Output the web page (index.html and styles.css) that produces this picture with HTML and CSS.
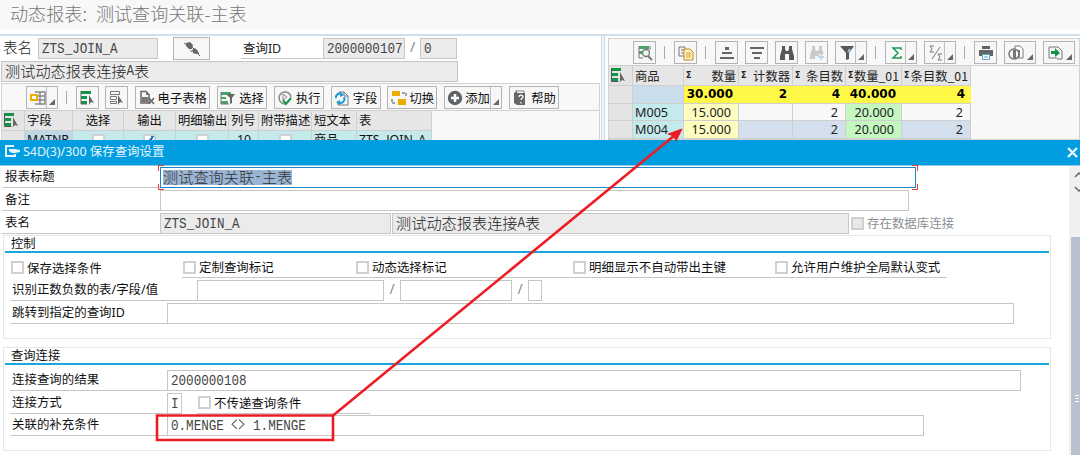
FILE: index.html
```
<!DOCTYPE html>
<html lang="zh-CN">
<head>
	<meta charset="UTF-8">
	<title>动态报表</title>
	<link rel="stylesheet" href="styles.css">
</head>
<body>
	<h1 class="titulo">动态报表: 测试查询关联-主表</h1>
	<div class="paneles">
		<section class="izquierda">
			<div class="filtros">
				<span class="nombre">表名</span>
				<span class="campo gris tabla-nombre"><i>ZTS_JOIN_A</i></span>
				<button class="btn enlace"><svg width="18" height="16" viewBox="0 0 18 16"><path d="M3 2l4-1 3 3-1 4-3 0-3-3zM9 9l3-2 3 3 1 3-3 0-3-1z" fill="#666"/><path d="M1 2l3 2M14 12l3 3M9 6l2 2M7 9l2 2" stroke="#666"/></svg></button>
				<span class="consulta">查询ID</span>
				<span class="campo gris numero"><i>2000000107</i></span>
				<span class="barra">/</span>
				<span class="campo gris cero"><i>0</i></span>
			</div>
			<div class="campo gris descripcion">测试动态报表连接<i class="letra">A</i>表</div>
			<div class="marco">
				<div class="herramientas">
					<button class="btn w32 partido"><svg width="17" height="16" viewBox="0 0 17 16"><path d="M5 2h10v12H5M10 2v12M6 6h9M6 10h9" stroke="#888" fill="none" stroke-width="1.5"/><path d="M1 5h6v5H1z" fill="#fff" stroke="#f0ab00" stroke-width="2"/></svg></button>
					<span class="sep"></span>
					<button class="btn w23"><svg width="15" height="16" viewBox="0 0 15 16"><path d="M1 1h10v3H1zM1 6h6v3H1zM1 11h6v3H1z" fill="#129447"/><path d="M9 5l5 8-3-1-2 3z" fill="#666"/><path d="M1 1v13h6" stroke="#666" fill="none"/></svg></button>
					<button class="btn w23"><svg width="15" height="16" viewBox="0 0 15 16"><path d="M1.500 1.500h9v3h-9zM1.500 6.500h6v3h-6zM1.500 11.500h6v2h-6z" fill="none" stroke="#777"/><path d="M9 5l5 8-3-1-2 3z" fill="#666"/></svg></button>
					<button class="btn w75"><svg width="16" height="16" viewBox="0 0 16 16"><path d="M2 1.500h5l3 3V13H2z" fill="none" stroke="#666" stroke-width="1.500"/><path d="M3 7h6v5H3zM7 1v4h4z" fill="#777"/><path d="M10 8l5 6M15 8l-5 6" stroke="#666" stroke-width="1.500"/></svg>电子表格</button>
					<button class="btn w50"><svg width="16" height="16" viewBox="0 0 16 16"><path d="M1 2h10v3H1zM1 7h5v2H1zM1 11h7v3H1z" fill="#45a56b"/><path d="M1 2v12h8" stroke="#777" fill="none"/><path d="M6 4h9l-3 4v5l-2 1V8z" fill="#666"/></svg>选择</button>
					<button class="btn w50"><svg width="16" height="16" viewBox="0 0 16 16"><path d="M14 7A6 6 0 1 0 8 14" fill="none" stroke="#888" stroke-width="1.500"/><path d="M6 4l4 3-4 3z" fill="none" stroke="#888"/><path d="M6 10l3 4 5-6" stroke="#129447" stroke-width="2" fill="none"/></svg>执行</button>
					<button class="btn w50"><svg width="16" height="16" viewBox="0 0 16 16"><path d="M5 2h5l4 4v9H4v-2M10 2v4h4" fill="none" stroke="#777"/><path d="M2 8a4 4 0 0 1 6-4M10 7a4 4 0 0 1-6 5" stroke="#1c9ad9" stroke-width="2" fill="none"/><path d="M6 2l4 3-4 2zM6 10l-4 2 4 3z" fill="#1c9ad9"/></svg>字段</button>
					<button class="btn w50"><svg width="16" height="16" viewBox="0 0 16 16"><path d="M1 1h8v5H1zM7 9h8v6H7z" fill="#f0ab00"/><path d="M11 3h4v4M1 9v4h4" stroke="#888" fill="none" stroke-width="1.500" stroke-dasharray="3 1"/></svg>切换</button>
					<button class="btn w58 partido"><svg width="16" height="16" viewBox="0 0 16 16"><circle cx="8" cy="8" r="7.200" fill="#606366"/><path d="M8 4v8M4 8h8" stroke="#fff" stroke-width="2.500"/></svg>添加</button>
					<button class="btn w50"><svg width="16" height="16" viewBox="0 0 16 16"><path d="M2 3l3-2v14l-3-2zM5 3h8v12H5z" fill="#666"/><path d="M3 1h9v2" stroke="#888" fill="none"/><path d="M7 7c0-3 4-2 4 0 0 1-2 1-2 3M9 12v1.500" stroke="#fff" fill="none" stroke-width="1.300"/></svg>帮助</button>
				</div>
				<div class="rejilla campos">
					<b class="sel"><svg width="17" height="16" viewBox="0 0 17 16"><path d="M2 1h9v3H2zM2 6h6v3H2zM2 11h6v3H2z" fill="#129447"/><path d="M10 5l5 9-3-1-2 2z" fill="#666"/><path d="M1.500 1v13.500h7" stroke="#555" fill="none"/></svg></b>
					<b>字段</b><b class="c">选择</b><b class="c">输出</b><b>明细输出</b><b>列号</b><b>附带描述</b><b>短文本</b><b>表</b>
					<span class="sel"></span><span class="activo">MATNR</span><span class="c"><u class="check"></u></span><span class="c"><u class="check marcado"></u></span><span class="c"><u class="check"></u></span><span class="d">10</span><span class="c"><u class="check"></u></span><span>商品</span><span>ZTS_JOIN_A</span>
				</div>
			</div>
		</section>
		<div class="divisor"></div>
		<section class="derecha">
			<div class="herramientas">
				<button class="btn w23"><svg width="16" height="16" viewBox="0 0 16 16"><path d="M2 1h10v3H2zM2 6h4v3H2z" fill="#45a56b"/><path d="M2 1v12h4M13 1v4" stroke="#777" fill="none"/><circle cx="9" cy="8" r="3.500" fill="#eef6f0" stroke="#777" stroke-width="1.400"/><path d="M11 11l4 4" stroke="#777" stroke-width="2"/></svg></button>
				<span class="sep"></span>
				<button class="btn w23"><svg width="16" height="16" viewBox="0 0 16 16"><path d="M1 2h6v9H1zM3 5h4M3 8h4" fill="none" stroke="#777"/><path d="M6 4h6l3 3v8H6z" fill="#fff3c4" stroke="#c38a20"/><path d="M8 8h5M8 10h5M8 12h5" stroke="#e09a20"/></svg></button>
				<span class="sep"></span>
				<button class="btn w23"><svg width="16" height="16" viewBox="0 0 16 16"><path d="M6 2h4v3H6zM3 7h10v2H3zM1 12h14v2H1z" fill="#666"/></svg></button>
				<button class="btn w23"><svg width="16" height="16" viewBox="0 0 16 16"><path d="M1 2h14v2H1zM3 7h10v2H3zM5 12h6v2H5z" fill="#666"/></svg></button>
				<button class="btn w23"><svg width="16" height="16" viewBox="0 0 16 16"><path d="M3 1h3v3l1 2h2l1-2V1h3v3l2 7v4h-5V9H6v6H1v-4l2-7z" fill="#55585b"/></svg></button>
				<button class="btn w23"><svg width="16" height="16" viewBox="0 0 16 16"><path d="M3 1h3v3l1 2h2l1-2V1h3v3l2 5h-5v2H6v3H1v-3l2-7z" fill="#c8cacb"/><path d="M12 9v6M9 12h6" stroke="#a6d9ef" stroke-width="1.500"/></svg></button>
				<button class="btn w32 partido"><svg width="17" height="16" viewBox="0 0 17 16"><path d="M1 1h14l-5 7v6l-3 1V8z" fill="#55585b"/><path d="M11 4l-2 3" stroke="#9fc3dc" stroke-width="2"/></svg></button>
				<span class="sep"></span>
				<button class="btn w32 partido"><svg width="16" height="16" viewBox="0 0 16 16"><path d="M12 5V3H4l5 5-5 5h8v-2" stroke="#1a9b56" stroke-width="1.500" fill="none"/></svg></button>
				<button class="btn w32 partido"><svg width="16" height="16" viewBox="0 0 16 16"><path d="M6 1H2l2 3-2 3h4M14 9h-4l2 3-2 3h4M12 2L4 14" stroke="#777" fill="none"/></svg></button>
				<span class="sep"></span>
				<button class="btn w23"><svg width="16" height="16" viewBox="0 0 16 16"><path d="M4 1h8v3H4zM1 5h14v6h-3V9H4v2H1z" fill="#606366"/><path d="M4.500 9.500h7v5h-7z" fill="#fff" stroke="#5da3c2"/><path d="M6 12h4" stroke="#5da3c2"/></svg></button>
				<button class="btn w32 flecha"><svg width="17" height="16" viewBox="0 0 17 16"><path d="M7 1h5l3 3v9H7z" fill="#fff" stroke="#777"/><circle cx="6" cy="9" r="5" fill="none" stroke="#777" stroke-width="1.500"/><path d="M5 5h3v8H5zM10 5h2v7h-2z" fill="#777"/></svg></button>
				<button class="btn w32 flecha"><svg width="17" height="16" viewBox="0 0 17 16"><path d="M9 2H2v11h8M9 2h2l4 4v8h-5" fill="none" stroke="#777"/><path d="M4 6h4V3l5 5-5 4V9H4z" fill="#129447"/></svg></button>
			</div>
			<div class="rejilla resultado">
				<b class="sel"><svg width="17" height="16" viewBox="0 0 17 16"><path d="M2 1h9v3H2zM2 6h6v3H2zM2 11h6v3H2z" fill="#129447"/><path d="M10 5l5 9-3-1-2 2z" fill="#666"/><path d="M1.500 1v13.500h7" stroke="#555" fill="none"/></svg></b>
				<b>商品</b><b><em>Σ</em>数量</b><b><em>Σ</em>计数器</b><b><em>Σ</em>条目数</b><b><em>Σ</em>数量_01</b><b><em>Σ</em>条目数_01</b>
				<span class="sel"></span><span class="vacio"></span><span class="total">30.000</span><span class="total">2</span><span class="total">4</span><span class="total">40.000</span><span class="total">4</span>
				<span class="sel"></span><span class="clave">M005</span><span class="amarillo">15.000</span><span></span><span>2</span><span class="verde">20.000</span><span>2</span>
				<span class="sel"></span><span class="clave">M004</span><span class="amarillo">15.000</span><span class="azul"></span><span class="azul">2</span><span class="verde">20.000</span><span class="azul">2</span>
			</div>
		</section>
	</div>

	<div class="dialogo">
		<div class="cabecera">
			<svg width="16" height="12" viewBox="0 0 16 12"><path d="M9 1H1v10h9V9" fill="none" stroke="#e8f4fb" stroke-width="2"/><path d="M4 4h6l5 1v2l-5 1H7L4 6z" fill="#e8f4fb"/></svg>
			<span>S4D(3)/300 保存查询设置</span>
			<svg class="cerrar" width="11" height="11" viewBox="0 0 11 11"><path d="M1 1l9 9M10 1l-9 9" stroke="#eaf6fc" stroke-width="2.400"/></svg>
		</div>
		<div class="cuerpo">
			<div class="formulario">
				<div class="linea"><label>报表标题</label><div class="campo foco"><mark>测试查询关联<i>-</i>主表</mark></div></div>
				<div class="linea"><label>备注</label><div class="campo nota"></div></div>
				<div class="linea"><label>表名</label><div class="campo gris t1"><i>ZTS_JOIN_A</i></div><div class="campo gris t2">测试动态报表连接<i class="letra">A</i>表</div><span class="opcion apagada"><u class="check"></u>存在数据库连接</span></div>
				<fieldset>
					<h2>控制</h2>
					<div class="opciones">
						<span class="opcion"><u class="check"></u>保存选择条件</span>
						<span class="opcion sub"><u class="check"></u>定制查询标记</span>
						<span class="opcion sub"><u class="check"></u>动态选择标记</span>
						<span class="opcion sub"><u class="check"></u>明细显示不自动带出主键</span>
						<span class="opcion sub"><u class="check"></u>允许用户维护全局默认变式</span>
					</div>
					<div class="linea"><label class="largo">识别正数负数的表/字段/值</label><div class="campo s1"></div><span class="barra">/</span><div class="campo s2"></div><span class="barra">/</span><div class="campo s3"></div></div>
					<div class="linea"><label>跳转到指定的查询ID</label><div class="campo salto"></div></div>
				</fieldset>
				<fieldset>
					<h2>查询连接</h2>
					<div class="linea"><label>连接查询的结果</label><div class="campo res"><i>2000000108</i></div></div>
					<div class="linea"><label>连接方式</label><div class="campo modo"><i>I</i></div><span class="opcion sub pasar"><u class="check"></u>不传递查询条件</span></div>
					<div class="linea"><label>关联的补充条件</label><div class="campo cond"><i>0.MENGE <svg width="14" height="9" viewBox="0 0 14 9"><path d="M6 .5l-5 4 5 4M8 .5l5 4-5 4" fill="none" stroke="#666"/></svg> 1.MENGE</i></div></div>
				</fieldset>
			</div>
			<div class="scroll">
				<svg width="11" height="24" viewBox="0 0 11 24"><path d="M6 7l4-4 4 4M6 17l4 4 4-4" fill="none" stroke="#666" stroke-width="1.500"/></svg>
				<div class="pulgar"><span></span></div>
			</div>
		</div>
	</div>

	<svg class="anotacion" width="1080" height="455" viewBox="0 0 1080 455">
		<path d="M157 415.500h176v24.500H157zM333 415.500L675 135" fill="none" stroke="#ed1c24" stroke-width="2.600"/>
		<path d="M682 129l-6 12-2-5-6-2z" fill="#ed1c24" stroke="#ed1c24"/>
	</svg>
</body>
</html>
```
FILE: styles.css
```
*{
	margin:0;
	padding:0;
	box-sizing: border-box;
}
body{
	width: 1080px;
	height: 455px;
	overflow: hidden;
	position: relative;
	background: #fff;
	color: #222;
	font-family: "Noto Sans", "Noto Sans CJK SC", sans-serif;
	font-size: 12.45px;
}
svg{
	flex: none;
}
.titulo{
	height: 29px;
	padding-left: 10px;
	background: #f8f8f8;
	color: #777;
	font-family: "Noto Sans CJK SC", sans-serif;
	font-size: 18.1px;
	font-weight: 300;
	line-height: 27px;
	word-spacing: 5px;
}
.paneles{
	display: flex;
	height: 106px;
	margin-top: 5px;
	border-top: 2px solid #d0dfec;
	overflow: hidden;
}
.izquierda{
	width: 601px;
	padding: 2px 0 0 1px;
}
.divisor{
	width: 4px;
	margin-right: 3px;
	border: 1px solid #cbdcec;
	border-width: 0 1px;
	background: #eef4fa;
}

/* campos */
.campo{
	height: 21px;
	padding-left: 3px;
	border: 1px solid #c6c6c6;
	background: #fff;
	font-family: "Noto Sans CJK SC", sans-serif;
	font-size: 15.2px;
	font-weight: 300;
	line-height: 17px;
	white-space: nowrap;
}
.campo i{
	font-family: "Liberation Mono", monospace;
	font-size: 12.6px;
	font-style: normal;
	font-weight: 400;
	color: #444;
	display: inline-block;
	line-height: 20px;
	vertical-align: top;
	white-space: pre;
	transform: scaleY(1.18);
}
.campo .letra{
	line-height: 21px;
	margin-bottom: -4px;
}
.gris{
	background: #ebebeb;
}
.barra{
	color: #888;
	text-align: center;
	font-size: 14px;
	line-height: 18px;
}
.filtros{
	display: flex;
	height: 23px;
}
.nombre{
	width: 37px;
	padding-left: 2px;
	font-size: 14.6px;
	font-weight: 300;
	line-height: 17px;
	font-family: "Noto Sans CJK SC", sans-serif;
}
.tabla-nombre{
	width: 120px;
}
.filtros .enlace{
	width: 37px;
	margin: -1px 31px 0 15px;
}
.consulta{
	width: 82px;
	height: 21px;
	padding-left: 2px;
	border-bottom: 1px solid #c6c6c6;
	line-height: 21px;
}
.numero{
	width: 82px;
}
.filtros .barra{
	width: 15px;
}
.cero{
	width: 37px;
}
.descripcion{
	width: 457px;
}
.marco{
	width: 599px;
	margin-top: 1px;
	border: 1px solid #d2d2d2;
	background: #f8f8f8;
}

/* barras de botones */
.herramientas{
	display: flex;
	gap: 7px;
	height: 27px;
	padding: 2px 0 0 24px;
	border-bottom: 1px solid #d0d0d0;
}
.izquierda .herramientas{
	gap: 6.800px;
}
.btn{
	display: flex;
	flex: none;
	align-items: center;
	justify-content: center;
	gap: 3px;
	height: 23px;
	position: relative;
	border: 1px solid #b4b4b4;
	background: #f7f7f7;
	color: #111;
	font: 12.3px "Noto Sans CJK SC", sans-serif;
	white-space: nowrap;
}
.w23{
	width: 23px;
}
.w32{
	width: 32px;
}
.w50{
	width: 50px;
}
.w58{
	width: 58px;
}
.w75{
	width: 75px;
}
.partido, .flecha{
	justify-content: flex-start;
	padding-left: 3px;
}
.w58.partido{
	padding-left: 2px;
	gap: 2px;
}
.partido::before{
	content: "";
	position: absolute;
	top: 0;
	right: 10px;
	height: 21px;
	border-left: 1px solid #c0c0c0;
}
.partido::after, .flecha::after{
	content: "";
	position: absolute;
	right: 2px;
	bottom: 3px;
	border: 3px solid #666;
	border-top-color: transparent;
	border-left-color: transparent;
}
.sep{
	width: 3px;
	height: 13px;
	margin-top: 5px;
	border-left: 1px solid #aaa;
	margin-left: 1px;
}

/* rejillas */
.rejilla{
	display: grid;
}
.rejilla b, .rejilla span{
	padding: 0 2px;
	border-right: 1px solid #cfcfcf;
	border-bottom: 1px solid #cfcfcf;
	font-weight: 400;
	white-space: nowrap;
	overflow: hidden;
}
.rejilla b{
	background: #e6e6e6;
}
.rejilla b.sel{
	padding: 1px;
}
.rejilla .c{
	text-align: center;
}
.campos{
	grid-template-columns: 23px 48px 51px 52px 53px 30px 53px 45px 75px;
	grid-template-rows: 20px 18px;
	line-height: 19px;
	font-size: 12.3px;
	color: #111;
}
.campos span{
	background: #c5eaec;
	line-height: 17px;
}
.campos .d{
	text-align: right;
	padding-right: 7px;
}
.rejilla .sel{
	background: #e4e4e4;
}
.campos .activo{
	background: #bed8e5;
}
.derecha{
	flex: 1;
	margin-top: 2px;
	border: 1px solid #d2d2d2;
	background: #f8f8f8;
}
.resultado{
	grid-template-columns: 24px 51px 55px 54px 53px 56px 69px;
	grid-template-rows: 20px 18px 17px 18px;
	line-height: 18px;
	font-size: 12.6px;
}
.resultado b{
	display: flex;
	justify-content: space-between;
	font-family: "Noto Sans CJK SC", sans-serif;
	font-size: 12.3px;
	line-height: 20px;
}
.resultado em{
	font: bold 8px/20px "DejaVu Sans", sans-serif;
}
.resultado span{
	text-align: right;
	padding-right: 7px;
	line-height: 17px;
}
.resultado .vacio{
	background: #c9deea;
}
.resultado .total{
	padding-right: 5px;
	background: #fff846;
	border-right-color: #fff846;
	font-family: "DejaVu Sans", sans-serif;
	font-size: 12px;
	font-weight: 700;
	line-height: 17px;
	color: #000;
}
.resultado .clave{
	background: #c5eaec;
	text-align: left;
}
.resultado .amarillo{
	background: #fffdc0;
}
.resultado .verde{
	background: #c5f7c1;
}
.resultado .azul{
	background: #d4dfee;
}

/* casillas */
.check{
	display: inline-block;
	flex: none;
	width: 13px;
	height: 13px;
	border: 2px solid #d0d0d0;
	background: #fff;
	text-decoration: none;
}
.campos .check{
	margin-top: 3px;
}
.marcado{
	background: linear-gradient(120deg, #fff 45%, #1678c8 46%, #1678c8 64%, #fff 65%);
}

/* dialogo */
.cabecera{
	display: flex;
	align-items: center;
	height: 26px;
	padding: 0 2px 3px 5px;
	background: #009de0;
	color: #e8f5fc;
	border-bottom: 1px solid #8fc9e6;
}
.cabecera span{
	margin-left: 2px;
}
.cabecera .cerrar{
	margin-left: auto;
	margin-top: 3px;
}
.cuerpo{
	display: flex;
	height: 289px;
}
.formulario{
	flex: 1;
	padding-left: 2px;
}
.linea{
	display: flex;
	height: 21px;
	margin-bottom: 1.6px;
}
.formulario > .linea:first-child{
	margin-top: 1px;
	margin-bottom: 2px;
}
.linea label{
	width: 158px;
	padding-left: 3px;
	border-bottom: 1px solid #c6c6c6;
	line-height: 20px;
	white-space: nowrap;
	color: #111;
}
.foco{
	position: relative;
	width: 756px;
	padding-left: 2px;
	border: 1px solid #1b86c5;
}
/* esquinas rojas del campo con foco */
.foco::before, .foco::after{
	content: "";
	position: absolute;
	top: -3px;
	bottom: -3px;
	width: 6px;
	background:
		linear-gradient(#e83c3c, #e83c3c) 0 0 / 6px 1px no-repeat,
		linear-gradient(#e83c3c, #e83c3c) 0 100% / 6px 1px no-repeat,
		linear-gradient(#e83c3c, #e83c3c) 0 0 / 1px 6px no-repeat,
		linear-gradient(#e83c3c, #e83c3c) 0 100% / 1px 6px no-repeat;
}
.foco::before{
	left: -3px;
}
.foco::after{
	right: -3px;
	transform: scaleX(-1);
}
mark{
	display: inline-block;
	height: 15px;
	margin-top: 2px;
	background: #9ab4d4;
	color: #333;
	line-height: 13px;
	vertical-align: top;
}
.campo mark i{
	line-height: 17px;
	margin-bottom: -4px;
}
.nota{
	width: 749px;
}
.t1{
	width: 231px;
	margin-right: 1px;
}
.t2{
	width: 457px;
}
.opcion{
	display: flex;
	align-items: center;
	gap: 3px;
	height: 21px;
	color: #111;
	white-space: nowrap;
}
.opcion.sub{
	border-bottom: 1px solid #c6c6c6;
}
.apagada{
	margin-left: 2px;
	color: #8c8f93;
}
.apagada .check{
	background: #e5e9ec;
}
fieldset{
	width: 1048px;
	height: 104px;
	margin-left: 1px;
	border: 1px solid #e6e6e6;
	padding: 0 1px;
}
fieldset + fieldset{
	margin-top: 8px;
}
h2{
	height: 17px;
	padding-left: 6px;
	margin-bottom: 5px;
	border-bottom: 2px solid #1ba6e0;
	font-size: 12.3px;
	font-weight: 400;
	line-height: 15px;
	color: #111;
}
fieldset .linea, .opciones{
	margin-left: 5px;
}
fieldset .linea label{
	width: 157px;
	padding-left: 2px;
}
fieldset .linea .largo{
	width: 187px;
}
.opciones{
	display: grid;
	grid-template-columns: 172px 173px 217px 202px 173px;
	margin-top: -1px;
	margin-bottom: 1.6px;
}
.opcion.sub, .opciones .opcion{
	padding-left: 1px;
}
.opciones + .linea{
	margin-bottom: 2.4px;
}
.s1{
	width: 187px;
}
.s2{
	width: 112px;
}
.s3{
	width: 14px;
}
.linea .barra{
	width: 16px;
}
.salto{
	width: 847px;
}
.res{
	width: 854px;
}
.modo{
	width: 15px;
}
.pasar{
	width: 173px;
	margin-left: 15px;
}
.cond{
	width: 757px;
}
.scroll{
	display: flex;
	flex-direction: column;
	width: 11px;
	background: #f0f0f0;
}
.scroll svg{
	margin-top: 4px;
}
.pulgar{
	flex: 1;
	margin: 43px 0 0 2px;
	background: #b7c1cd;
}
.pulgar span{
	display: block;
	width: 4px;
	height: 7px;
	margin: 158px 0 0 4px;
	background: repeating-linear-gradient(#fff 0 1px, #b7c1cd 1px 3px);
}
.anotacion{
	position: absolute;
	top: 0;
	left: 0;
}
```
